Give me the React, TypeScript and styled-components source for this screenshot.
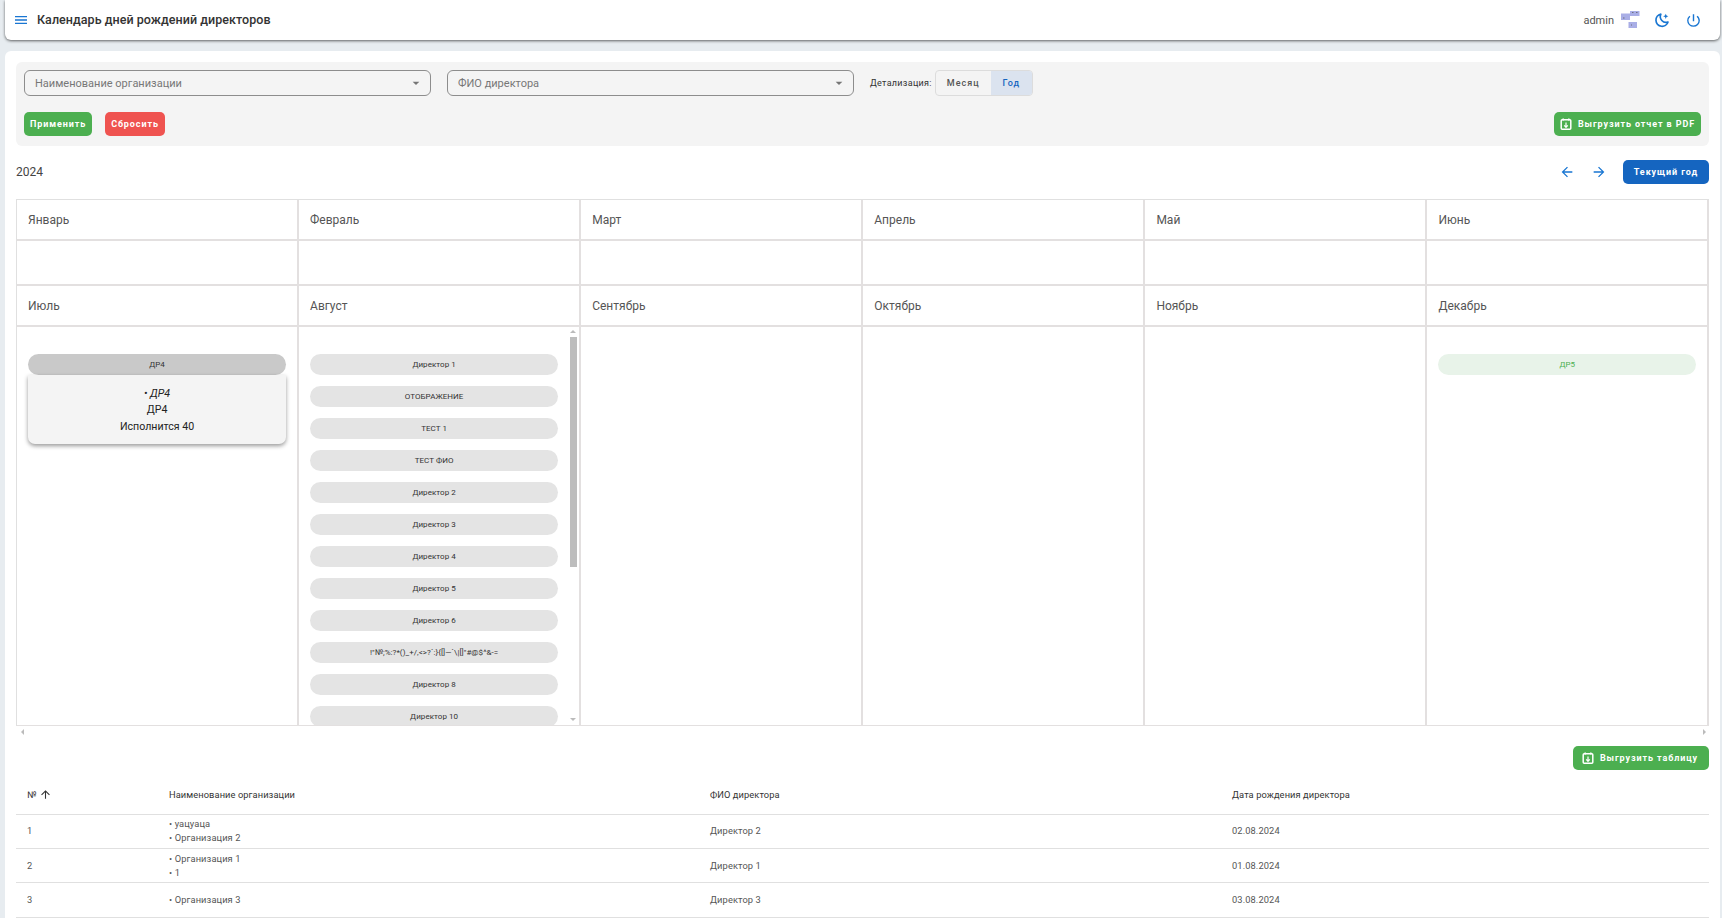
import React from "react";
import styled, { createGlobalStyle } from "styled-components";
import {
  MdMenu,
  MdOutlinePowerSettingsNew,
  MdArrowBack,
  MdArrowForward,
  MdArrowUpward,
  MdArrowDropDown,
} from "react-icons/md";

const GlobalStyle = createGlobalStyle`
  html, body {
    margin: 0;
    height: 918px;
    overflow: hidden;
    background: #e7ecf0;
    font-family: Roboto, "Noto Sans", sans-serif;
  }
  * { box-sizing: border-box; }
`;

const Page = styled.div`
  display: flex;
  flex-direction: column;
  gap: 11px;
  height: 918px;
  padding: 0 2px 0 5px;
`;

const AppBar = styled.header`
  flex: none;
  display: flex;
  align-items: center;
  height: 40px;
  padding: 0 18px 0 8px;
  background: #fff;
  border-radius: 0 0 6px 6px;
  box-shadow: 0 1px 3px rgba(0, 0, 0, 0.6);
`;

const BarIcon = styled.span<{ $gap?: number }>`
  display: flex;
  color: #1976d2;
  margin-left: ${({ $gap }) => $gap ?? 0}px;
`;

const Title = styled.h1`
  margin: 0 0 1px 8px;
  font-size: 12.5px;
  font-weight: 500;
  color: #333;
  letter-spacing: 0.05px;
  flex: 1;
`;

const UserName = styled.span`
  font-size: 11px;
  color: #555;
`;

const Card = styled.main`
  flex: 1;
  min-height: 0;
  display: flex;
  flex-direction: column;
  padding: 11px 11px 0 11px;
  background: #fff;
  border-radius: 6px 6px 0 0;
  overflow: hidden;
`;

const FilterPanel = styled.section`
  flex: none;
  display: flex;
  flex-direction: column;
  gap: 16px;
  height: 84px;
  padding: 8px;
  background: #f4f4f4;
  border-radius: 6px;
`;

const FilterRow = styled.div`
  display: flex;
  align-items: center;
  justify-content: space-between;
`;

const FilterGroup = styled.div<{ $gap: number }>`
  display: flex;
  align-items: center;
  gap: ${({ $gap }) => $gap}px;
`;

const Select = styled.div`
  display: flex;
  align-items: center;
  justify-content: space-between;
  width: 407px;
  height: 26px;
  padding: 0 6px 0 10px;
  border: 1px solid #8d8d8d;
  border-radius: 6px;
  font-size: 11px;
  color: #777;

  svg { color: #757575; }
`;

const DetailLabel = styled.span`
  margin-right: 3px;
  font-size: 9px;
  letter-spacing: 0.3px;
  color: #333;
`;

const Toggle = styled.div`
  display: flex;
  height: 26px;
  border: 1px solid #dcdcdc;
  border-radius: 4px;
  overflow: hidden;
`;

const ToggleItem = styled.span<{ $active?: boolean }>`
  display: flex;
  align-items: center;
  justify-content: center;
  width: ${({ $active }) => ($active ? 41 : 55)}px;
  font-size: 9px;
  font-weight: 500;
  letter-spacing: 1px;
  color: ${({ $active }) => ($active ? "#1565c0" : "#555")};
  background: ${({ $active }) => ($active ? "#dbe3ef" : "transparent")};
`;

const colors = { green: "#4caf50", red: "#ef5350", blue: "#1565c0" };

const ActionButton = styled.button<{ $color: keyof typeof colors; $pad?: string }>`
  display: inline-flex;
  align-items: center;
  gap: 6px;
  height: 24px;
  padding: ${({ $pad }) => $pad ?? "0 6px"};
  border: 0;
  border-radius: 5px;
  background: ${({ $color }) => colors[$color]};
  color: #fff;
  font-family: inherit;
  font-size: 9px;
  font-weight: 700;
  letter-spacing: 0.9px;
  white-space: nowrap;
`;

const YearRow = styled.div`
  flex: none;
  display: flex;
  align-items: center;
  height: 24px;
  margin: 14px 0 15px;
`;

const YearText = styled.span`
  flex: 1;
  font-size: 12px;
  color: #444;
`;

const YearArrow = styled.span`
  display: flex;
  color: #1976d2;
  margin-right: 16px;
`;

const CalendarGrid = styled.section`
  flex: none;
  display: grid;
  grid-template-columns: repeat(5, 282.1px) 1fr;
  grid-template-rows: 41px 45px 41px 399px;
  border-top: 1px solid #e0e0e0;
  border-left: 1px solid #e0e0e0;
`;

const MonthHeader = styled.div`
  display: flex;
  align-items: center;
  padding-left: 11px;
  font-size: 12px;
  color: #555;
  border-right: 2px solid #e3e0e0;
  border-bottom: 2px solid #e3e0e0;
`;

const MonthBody = styled.div<{ $last?: boolean }>`
  position: relative;
  display: flex;
  flex-direction: column;
  gap: 11px;
  padding: 27px 11px 0;
  overflow: hidden;
  border-right: 2px solid #e3e0e0;
  border-bottom: ${({ $last }) => ($last ? 1 : 2)}px solid #e3e0e0;
`;

const pillStyles = {
  plain: "background:#e4e4e4;color:#333;",
  active: "background:#c9c9c9;color:#333;",
  green: "background:#e8f3e9;color:#4caf50;",
};

const Pill = styled.div<{ $kind: keyof typeof pillStyles; $narrow?: boolean }>`
  flex: none;
  display: flex;
  align-items: center;
  justify-content: center;
  height: 21px;
  width: ${({ $narrow }) => ($narrow ? "248px" : "100%")};
  border-radius: 11px;
  font-size: 8px;
  letter-spacing: 0.05px;
  ${({ $kind }) => pillStyles[$kind]}
`;

const PillStack = styled.div`
  display: flex;
  flex-direction: column;
`;

const Popup = styled.div`
  display: flex;
  flex-direction: column;
  justify-content: center;
  height: 69px;
  padding-top: 2px;
  background: #f4f4f4;
  border-radius: 0 0 7px 7px;
  box-shadow: 0 2px 4px rgba(0, 0, 0, 0.4);
  font-size: 10.6px;
  line-height: 16.3px;
  color: #222;
  text-align: center;
`;

const PopupName = styled.em`
  font-style: italic;
`;

const ScrollTrack = styled.div`
  position: absolute;
  top: 3px;
  right: 2px;
  bottom: 0;
  width: 8px;
  display: flex;
  flex-direction: column;
  align-items: center;
`;

const ScrollThumb = styled.div`
  width: 7px;
  height: 230px;
  margin-top: 4px;
  background: #bdbdbd;
`;

const ScrollTriangle = styled.span<{ $dir: "up" | "down" | "left" | "right" }>`
  display: block;
  width: 0;
  height: 0;
  border: 3px solid transparent;
  ${({ $dir }) =>
    $dir === "up"
      ? "border-bottom:3px solid #bbb;border-top-width:0;"
      : $dir === "down"
      ? "border-top:3px solid #bbb;border-bottom-width:0;margin-top:auto;margin-bottom:4px;"
      : $dir === "left"
      ? "border-right:3px solid #bbb;border-left-width:0;"
      : "border-left:3px solid #bbb;border-right-width:0;"}
`;

const HScroll = styled.div`
  flex: none;
  display: flex;
  align-items: center;
  justify-content: space-between;
  height: 12px;
  padding: 0 3px 0 5px;
`;

const ExportRow = styled.div`
  flex: none;
  display: flex;
  justify-content: flex-end;
  margin-top: 8px;
`;

const DataTable = styled.table`
  flex: none;
  width: 100%;
  border-collapse: collapse;
  table-layout: fixed;
  font-size: 9.3px;
  color: #555;
`;

const HeadCell = styled.th`
  height: 44px;
  padding: 12px 0 6px 11px;
  text-align: left;
  font-weight: 400;
  letter-spacing: 0.08px;
  color: #333;
  border-bottom: 1px solid #e0e0e0;

  svg { vertical-align: -3px; margin-left: 2px; }
`;

const BodyCell = styled.td`
  height: 34.4px;
  padding: 0 0 0 11px;
  line-height: 14px;
  letter-spacing: 0.1px;
  border-bottom: 1px solid #e0e0e0;
`;

// Drawn by hand: a calendar page with a down arrow, no package has this exact one
const ExportIcon = () => (
  <svg width="12" height="12" viewBox="0 0 12 12" fill="none" stroke="#fff" strokeWidth="1.5">
    <rect x="1.2" y="1.8" width="9.6" height="9.4" rx="1" />
    <path d="M3.2 0.4v2M8.8 0.4v2" />
    <path d="M6 4.6v4.6M4.2 7.4 6 9.4l1.8-2" strokeWidth="1.2" />
  </svg>
);

const UserBadge = () => (
  <svg width="20" height="18" viewBox="0 0 20 18" style={{ marginLeft: 7 }}>
    <rect x="0" y="2.5" width="9" height="6.5" fill="#a9aee6" />
    <rect x="9" y="0" width="9.5" height="5" fill="#a9aee6" />
    <rect x="7.5" y="11" width="8.5" height="6" fill="#a9aee6" />
    <path d="M11 1.5h1.5M15 1.5h1.5M2 7h1.5M10 14h1" stroke="#555" strokeWidth="0.7" />
  </svg>
);

const MoonIcon = () => (
  <svg width="18" height="18" viewBox="0 0 24 24" fill="none">
    <path
      d="M10.5 4.2A8.2 8.2 0 1 0 20 14.6 7.6 7.6 0 0 1 10.5 4.2Z"
      stroke="#1976d2"
      strokeWidth="2.2"
      strokeLinejoin="round"
    />
    <path d="M17 3.5l1 2.5 2.5 1-2.5 1-1 2.5-1-2.5-2.5-1 2.5-1z" fill="#1976d2" />
  </svg>
);

const months = [
  ["Январь", "Февраль", "Март", "Апрель", "Май", "Июнь"],
  ["Июль", "Август", "Сентябрь", "Октябрь", "Ноябрь", "Декабрь"],
];

const august = [
  "Директор 1",
  "ОТОБРАЖЕНИЕ",
  "ТЕСТ 1",
  "ТЕСТ ФИО",
  "Директор 2",
  "Директор 3",
  "Директор 4",
  "Директор 5",
  "Директор 6",
  "!\"№;%:?*()_+/,<>?`:}{[]—`\\|[]\"#@$^&-=",
  "Директор 8",
  "Директор 10",
];

const rows = [
  { id: 1, orgs: ["уацуаца", "Организация 2"], name: "Директор 2", date: "02.08.2024" },
  { id: 2, orgs: ["Организация 1", "1"], name: "Директор 1", date: "01.08.2024" },
  { id: 3, orgs: ["Организация 3"], name: "Директор 3", date: "03.08.2024" },
];

const secondHalfBody = (month: string) => {
  if (month === "Июль") {
    return (
      <PillStack>
        <Pill $kind="active">ДР4</Pill>
        <Popup>
          <PopupName>• ДР4</PopupName>
          <span>ДР4</span>
          <span>Исполнится 40</span>
        </Popup>
      </PillStack>
    );
  }
  if (month === "Август") {
    return (
      <>
        {august.map((name) => (
          <Pill key={name} $kind="plain" $narrow>
            {name}
          </Pill>
        ))}
        <ScrollTrack>
          <ScrollTriangle $dir="up" />
          <ScrollThumb />
          <ScrollTriangle $dir="down" />
        </ScrollTrack>
      </>
    );
  }
  if (month === "Декабрь") {
    return <Pill $kind="green">ДР5</Pill>;
  }
  return null;
};

export default function App() {
  return (
    <>
      <GlobalStyle />
      <Page>
        <AppBar>
          <BarIcon>
            <MdMenu size={16} />
          </BarIcon>
          <Title>Календарь дней рождений директоров</Title>
          <UserName>admin</UserName>
          <UserBadge />
          <BarIcon $gap={12}>
            <MoonIcon />
          </BarIcon>
          <BarIcon $gap={14}>
            <MdOutlinePowerSettingsNew size={17} />
          </BarIcon>
        </AppBar>

        <Card>
          <FilterPanel>
            <FilterRow>
              <FilterGroup $gap={16}>
                <Select>
                  Наименование организации
                  <MdArrowDropDown size={16} />
                </Select>
                <Select>
                  ФИО директора
                  <MdArrowDropDown size={16} />
                </Select>
                <FilterGroup $gap={0}>
                  <DetailLabel>Детализация:</DetailLabel>
                  <Toggle>
                    <ToggleItem>Месяц</ToggleItem>
                    <ToggleItem $active>Год</ToggleItem>
                  </Toggle>
                </FilterGroup>
              </FilterGroup>
            </FilterRow>
            <FilterRow>
              <FilterGroup $gap={13}>
                <ActionButton $color="green">Применить</ActionButton>
                <ActionButton $color="red">Сбросить</ActionButton>
              </FilterGroup>
              <ActionButton $color="green">
                <ExportIcon />
                Выгрузить отчет в PDF
              </ActionButton>
            </FilterRow>
          </FilterPanel>

          <YearRow>
            <YearText>2024</YearText>
            <YearArrow>
              <MdArrowBack size={16} />
            </YearArrow>
            <YearArrow>
              <MdArrowForward size={16} />
            </YearArrow>
            <ActionButton $color="blue" $pad="0 11px">
              Текущий год
            </ActionButton>
          </YearRow>

          <CalendarGrid>
            {months[0].map((m) => (
              <MonthHeader key={m}>{m}</MonthHeader>
            ))}
            {months[0].map((m) => (
              <MonthBody key={m} />
            ))}
            {months[1].map((m) => (
              <MonthHeader key={m}>{m}</MonthHeader>
            ))}
            {months[1].map((m) => (
              <MonthBody key={m} $last>
                {secondHalfBody(m)}
              </MonthBody>
            ))}
          </CalendarGrid>

          <HScroll>
            <ScrollTriangle $dir="left" />
            <ScrollTriangle $dir="right" />
          </HScroll>

          <ExportRow>
            <ActionButton $color="green" $pad="0 11px 0 9px">
              <ExportIcon />
              Выгрузить таблицу
            </ActionButton>
          </ExportRow>

          <DataTable>
            <colgroup>
              <col width={142} />
              <col width={541} />
              <col width={522} />
              <col />
            </colgroup>
            <thead>
              <tr>
                <HeadCell>
                  №
                  <MdArrowUpward size={13} />
                </HeadCell>
                <HeadCell>Наименование организации</HeadCell>
                <HeadCell>ФИО директора</HeadCell>
                <HeadCell>Дата рождения директора</HeadCell>
              </tr>
            </thead>
            <tbody>
              {rows.map((row) => (
                <tr key={row.id}>
                  <BodyCell>{row.id}</BodyCell>
                  <BodyCell>
                    {row.orgs.map((org) => (
                      <div key={org}>• {org}</div>
                    ))}
                  </BodyCell>
                  <BodyCell>{row.name}</BodyCell>
                  <BodyCell>{row.date}</BodyCell>
                </tr>
              ))}
            </tbody>
          </DataTable>
        </Card>
      </Page>
    </>
  );
}
